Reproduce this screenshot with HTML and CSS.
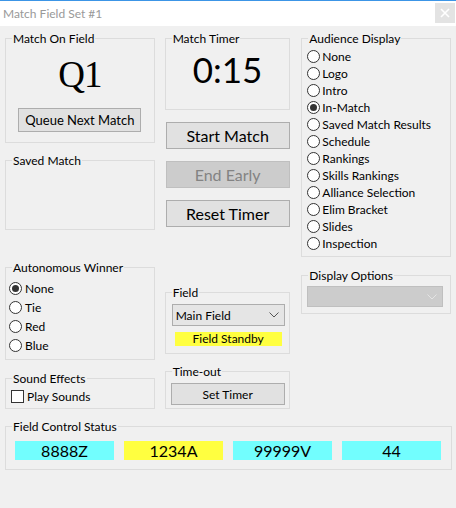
FILE: index.html
```html
<!DOCTYPE html>
<html>
<head>
<meta charset="utf-8">
<link rel="stylesheet" href="styles.css">
</head>
<body>
<div class="window">
  <div class="titlebar">
    <span class="title">Match Field Set #1</span>
    <span class="close"><svg width="10" height="10" viewBox="0 0 10 10"><path d="M1 1L9 9M9 1L1 9" stroke="#fff" stroke-width="1.6"/></svg></span>
  </div>
  <div class="content">
    <div class="columns">
      <div class="col col-left">
        <div class="group g-match">
          <div class="gt">Match On Field</div>
          <div class="big-q">Q1</div>
          <div class="btn btn-queue">Queue Next Match</div>
        </div>
        <div class="group g-saved">
          <div class="gt">Saved Match</div>
        </div>
        <div class="group g-auto">
          <div class="gt">Autonomous Winner</div>
          <div class="radios auto-radios">
            <div class="opt"><span class="radio on"></span><span>None</span></div>
            <div class="opt"><span class="radio"></span><span>Tie</span></div>
            <div class="opt"><span class="radio"></span><span>Red</span></div>
            <div class="opt"><span class="radio"></span><span>Blue</span></div>
          </div>
        </div>
        <div class="group g-sound">
          <div class="gt">Sound Effects</div>
          <div class="opt check-opt"><span class="check"></span><span>Play Sounds</span></div>
        </div>
      </div>
      <div class="col col-mid">
        <div class="group g-timer">
          <div class="gt">Match Timer</div>
          <div class="big-t">0:15</div>
        </div>
        <div class="btn btn-big btn-start">Start Match</div>
        <div class="btn btn-big btn-disabled btn-end">End Early</div>
        <div class="btn btn-big btn-reset">Reset Timer</div>
        <div class="group g-field">
          <div class="gt">Field</div>
          <div class="combo combo-field"><span>Main Field</span><svg width="10" height="6" viewBox="0 0 10 6"><path d="M0.5 0.5L5 5L9.5 0.5" fill="none" stroke="#555" stroke-width="1"/></svg></div>
          <div class="standby">Field Standby</div>
        </div>
        <div class="group g-timeout">
          <div class="gt">Time-out</div>
          <div class="btn btn-set">Set Timer</div>
        </div>
      </div>
      <div class="col col-right">
        <div class="group g-aud">
          <div class="gt">Audience Display</div>
          <div class="radios aud-radios">
            <div class="opt"><span class="radio"></span><span>None</span></div>
            <div class="opt"><span class="radio"></span><span>Logo</span></div>
            <div class="opt"><span class="radio"></span><span>Intro</span></div>
            <div class="opt"><span class="radio on"></span><span>In-Match</span></div>
            <div class="opt"><span class="radio"></span><span>Saved Match Results</span></div>
            <div class="opt"><span class="radio"></span><span>Schedule</span></div>
            <div class="opt"><span class="radio"></span><span>Rankings</span></div>
            <div class="opt"><span class="radio"></span><span>Skills Rankings</span></div>
            <div class="opt"><span class="radio"></span><span>Alliance Selection</span></div>
            <div class="opt"><span class="radio"></span><span>Elim Bracket</span></div>
            <div class="opt"><span class="radio"></span><span>Slides</span></div>
            <div class="opt"><span class="radio"></span><span>Inspection</span></div>
          </div>
        </div>
        <div class="group g-dispopt">
          <div class="gt">Display Options</div>
          <div class="combo combo-disabled"><span></span><svg width="10" height="6" viewBox="0 0 10 6"><path d="M0.5 0.5L5 5L9.5 0.5" fill="none" stroke="#e4e4e4" stroke-width="1"/></svg></div>
        </div>
      </div>
    </div>
    <div class="group g-status">
      <div class="gt">Field Control Status</div>
      <div class="status-row">
        <div class="sbox cyan">8888Z</div>
        <div class="sbox yellow">1234A</div>
        <div class="sbox cyan">99999V</div>
        <div class="sbox cyan">44</div>
      </div>
    </div>
  </div>
</div>
</body>
</html>
```
FILE: styles.css
```css
* { box-sizing: border-box; }
body {
  margin: 0;
  background: #f0f0f0;
  font-family: Lato, "Noto Sans", sans-serif;
  font-size: 12px;
  color: #000;
}
.window {
  width: 456px;
  height: 508px;
  background: #f0f0f0;
  overflow: hidden;
}
.titlebar {
  height: 26px;
  border-top: 1px solid #3c95e6;
  background: #fff;
  display: flex;
  align-items: flex-start;
  justify-content: space-between;
}
.title {
  color: #999;
  padding-left: 3px;
  margin-top: 5px;
  line-height: 16px;
  font-size: 12px;
}
.close {
  width: 20px;
  height: 20px;
  margin-top: 2px;
  margin-right: 1px;
  background: #e3e3e3;
  display: flex;
  align-items: center;
  justify-content: center;
}
.content {
  padding: 12px 5px 0 5px;
}
.columns {
  display: flex;
  align-items: flex-start;
}
.col { display: flex; flex-direction: column; }
.col-left { width: 150px; }
.col-mid { width: 126px; margin-left: 10px; }
.col-right { width: 150px; margin-left: 11px; }

.group {
  border: 1px solid #dcdcdc;
  display: flex;
  flex-direction: column;
  align-items: flex-start;
}
.gt {
  margin: -8px 0 0 6px;
  padding: 0 1px;
  line-height: 16px;
  background: #f0f0f0;
  white-space: nowrap;
}

/* left column */
.g-match { height: 105px; align-items: center; }
.g-match .gt { align-self: flex-start; }
.big-q {
  font-family: "Liberation Serif", serif;
  font-size: 37px;
  line-height: 40px;
  margin-top: 8px;
  letter-spacing: -1px;
}
.btn {
  background: #e1e1e1;
  border: 1px solid #adadad;
  display: flex;
  align-items: center;
  justify-content: center;
  white-space: nowrap;
}
.btn-queue {
  width: 123px;
  height: 24px;
  margin-top: 13px;
  font-size: 13px;
}
.g-saved { height: 70px; margin-top: 17px; }
.g-auto { height: 93px; margin-top: 37px; }
.g-sound { height: 31px; margin-top: 18px; }

.opt {
  display: flex;
  align-items: center;
  white-space: nowrap;
}
.radio {
  width: 13px;
  height: 13px;
  border: 1px solid #333;
  border-radius: 50%;
  background: #fff;
  display: flex;
  align-items: center;
  justify-content: center;
  flex: none;
}
.radio.on::after {
  content: "";
  width: 7px;
  height: 7px;
  border-radius: 50%;
  background: #333;
}
.auto-radios { margin-top: 3px; padding-left: 3px; }
.auto-radios .opt { height: 19px; gap: 3px; }
.check-opt { height: 17px; margin-top: 1px; padding-left: 5px; gap: 3px; }
.check {
  width: 13px;
  height: 13px;
  border: 1px solid #333;
  background: #fff;
  flex: none;
}

/* middle column */
.g-timer { height: 72px; align-items: center; }
.g-timer .gt { align-self: flex-start; }
.big-t {
  font-size: 35px;
  line-height: 40px;
  margin-top: 2px;
}
.btn-big {
  width: 124px;
  height: 27px;
  margin-left: 1px;
  font-size: 16px;
}
.btn-start { margin-top: 12px; }
.btn-end { margin-top: 12px; }
.btn-reset { margin-top: 12px; }
.btn-disabled {
  background: #cccccc;
  border-color: #bfbfbf;
  color: #838383;
}
.g-field { height: 62px; margin-top: 65px; }
.combo {
  display: flex;
  align-items: center;
  justify-content: space-between;
  border: 1px solid #adadad;
  background: #e5e5e5;
  padding: 0 5px 0 3px;
}
.combo-field {
  width: 113px;
  height: 22px;
  margin: 3px 0 0 6px;
}
.standby {
  width: 107px;
  height: 14px;
  margin: 6px 0 0 9px;
  background: #ffff40;
  display: flex;
  align-items: center;
  justify-content: center;
  line-height: 14px;
}
.g-timeout { height: 38px; margin-top: 17px; }
.btn-set {
  width: 114px;
  height: 22px;
  margin: 3px 0 0 5px;
}

/* right column */
.g-aud { height: 219px; }
.aud-radios { margin-top: 1px; padding-left: 5px; }
.aud-radios .opt { height: 17px; gap: 2px; }
.g-dispopt { height: 39px; margin-top: 18px; }
.combo-disabled {
  width: 136px;
  height: 21px;
  margin: 2px 0 0 5px;
  background: #cccccc;
  border-color: #bfbfbf;
}

/* status */
.g-status {
  width: 447px;
  height: 44px;
  margin-top: 17px;
}
.status-row {
  display: flex;
  gap: 10px;
  margin-top: 6px;
  padding-left: 9px;
}
.sbox {
  width: 99px;
  height: 19px;
  display: flex;
  align-items: center;
  justify-content: center;
  font-size: 16px;
}
.cyan { background: #72fefe; }
.yellow { background: #ffff40; }
```
